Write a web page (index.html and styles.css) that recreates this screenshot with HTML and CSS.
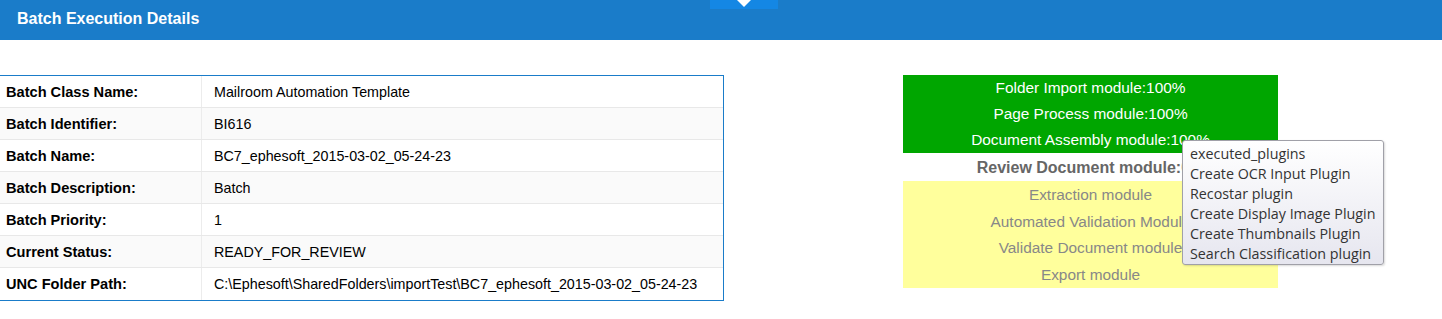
FILE: index.html
```html
<!DOCTYPE html>
<html lang="en">
<head>
  <meta charset="UTF-8">
  <title>Batch Execution Details</title>
  <link rel="stylesheet" href="styles.css">
</head>
<body>
  <header class="page-header">
    <h1>Batch Execution Details</h1>
    <span class="header-tab"></span>
  </header>

  <main class="content">
    <div class="details-box">
      <table class="details">
        <tr><th>Batch Class Name:</th><td>Mailroom Automation Template</td></tr>
        <tr><th>Batch Identifier:</th><td>BI616</td></tr>
        <tr><th>Batch Name:</th><td>BC7_ephesoft_2015-03-02_05-24-23</td></tr>
        <tr><th>Batch Description:</th><td>Batch</td></tr>
        <tr><th>Batch Priority:</th><td>1</td></tr>
        <tr><th>Current Status:</th><td>READY_FOR_REVIEW</td></tr>
        <tr><th>UNC Folder Path:</th><td>C:\Ephesoft\SharedFolders\importTest\BC7_ephesoft_2015-03-02_05-24-23</td></tr>
      </table>
    </div>

    <div class="status-panel">
      <div class="module done">Folder Import module:100%</div>
      <div class="module done">Page Process module:100%</div>
      <div class="module done">Document Assembly module:100%</div>
      <div class="module running">Review Document module:0%</div>
      <div class="module pending">Extraction module</div>
      <div class="module pending">Automated Validation Module</div>
      <div class="module pending">Validate Document module</div>
      <div class="module pending">Export module</div>

      <div class="tooltip">
        <div>executed_plugins</div>
        <div>Create OCR Input Plugin</div>
        <div>Recostar plugin</div>
        <div>Create Display Image Plugin</div>
        <div>Create Thumbnails Plugin</div>
        <div>Search Classification plugin</div>
      </div>
    </div>
  </main>
</body>
</html>
```

FILE: styles.css
```css
body {
  margin: 0;
  font-family: "Liberation Sans", Arial, sans-serif;
  background: white;
  color: #000;
}
.page-header {
  position: relative;
  height: 40px;
  background: #1a7cc9;
  padding-left: 17px;
}
.page-header h1 {
  margin: 0;
  font-size: 16px;
  line-height: 38px;
  color: white;
}
.header-tab {
  position: absolute;
  left: 710px;
  top: 0;
  width: 68px;
  height: 9px;
  background: #1487e4;
}
.header-tab::after {
  content: "";
  position: absolute;
  left: 27px;
  top: 0;
  border-left: 7px solid transparent;
  border-right: 7px solid transparent;
  border-top: 7px solid white;
}
.content {
  display: flex;
  align-items: flex-start;
  padding-top: 35px;
}
.details-box {
  width: 723px;
  border-top: 1px solid #1a7cc9;
  border-right: 1px solid #1a7cc9;
  border-bottom: 1px solid #1a7cc9;
}
.details {
  width: 100%;
  border-collapse: collapse;
  font-size: 14.3px;
}
.details th, .details td {
  height: 31px;
  padding: 0;
  border-bottom: 1px solid #e8e8e8;
  text-align: left;
  vertical-align: middle;
}
.details tr:last-child th, .details tr:last-child td {
  border-bottom: none;
  height: 32px;
}
.details td {
  padding-left: 12px;
}
.details tr:nth-child(even) {
  background: #fafafa;
}
.details th {
  width: 195px;
  padding-left: 6px;
  font-size: 14.6px;
  border-right: 1px solid #ececec;
}
.status-panel {
  position: relative;
  width: 375px;
  margin-left: 179px;
  font-size: 15.4px;
  text-align: center;
}
.module {
  white-space: nowrap;
  overflow: hidden;
}
.done {
  background: #00a600;
  color: white;
  line-height: 26px;
}
.running {
  line-height: 28px;
  padding-top: 1px;
  height: 27px;
  font-size: 16px;
  font-weight: bold;
  color: #666;
}
.pending {
  background: #ffff9c;
  color: #888;
  line-height: 26.5px;
}
.running + .pending {
  padding-top: 1px;
  line-height: 26px;
  height: 26.5px;
}
.tooltip {
  position: absolute;
  left: 279px;
  top: 65px;
  width: 186px;
  padding: 3px 7px 0;
  border: 1px solid #a0a0a8;
  border-radius: 3px;
  background: linear-gradient(to bottom, #ffffff, #e6e6ef);
  box-shadow: 1px 1px 2px rgba(0,0,0,0.15);
  font-family: "Open Sans", "Noto Sans", sans-serif;
  font-size: 14.3px;
  line-height: 20px;
  color: #333;
  text-align: left;
  white-space: nowrap;
}
```
